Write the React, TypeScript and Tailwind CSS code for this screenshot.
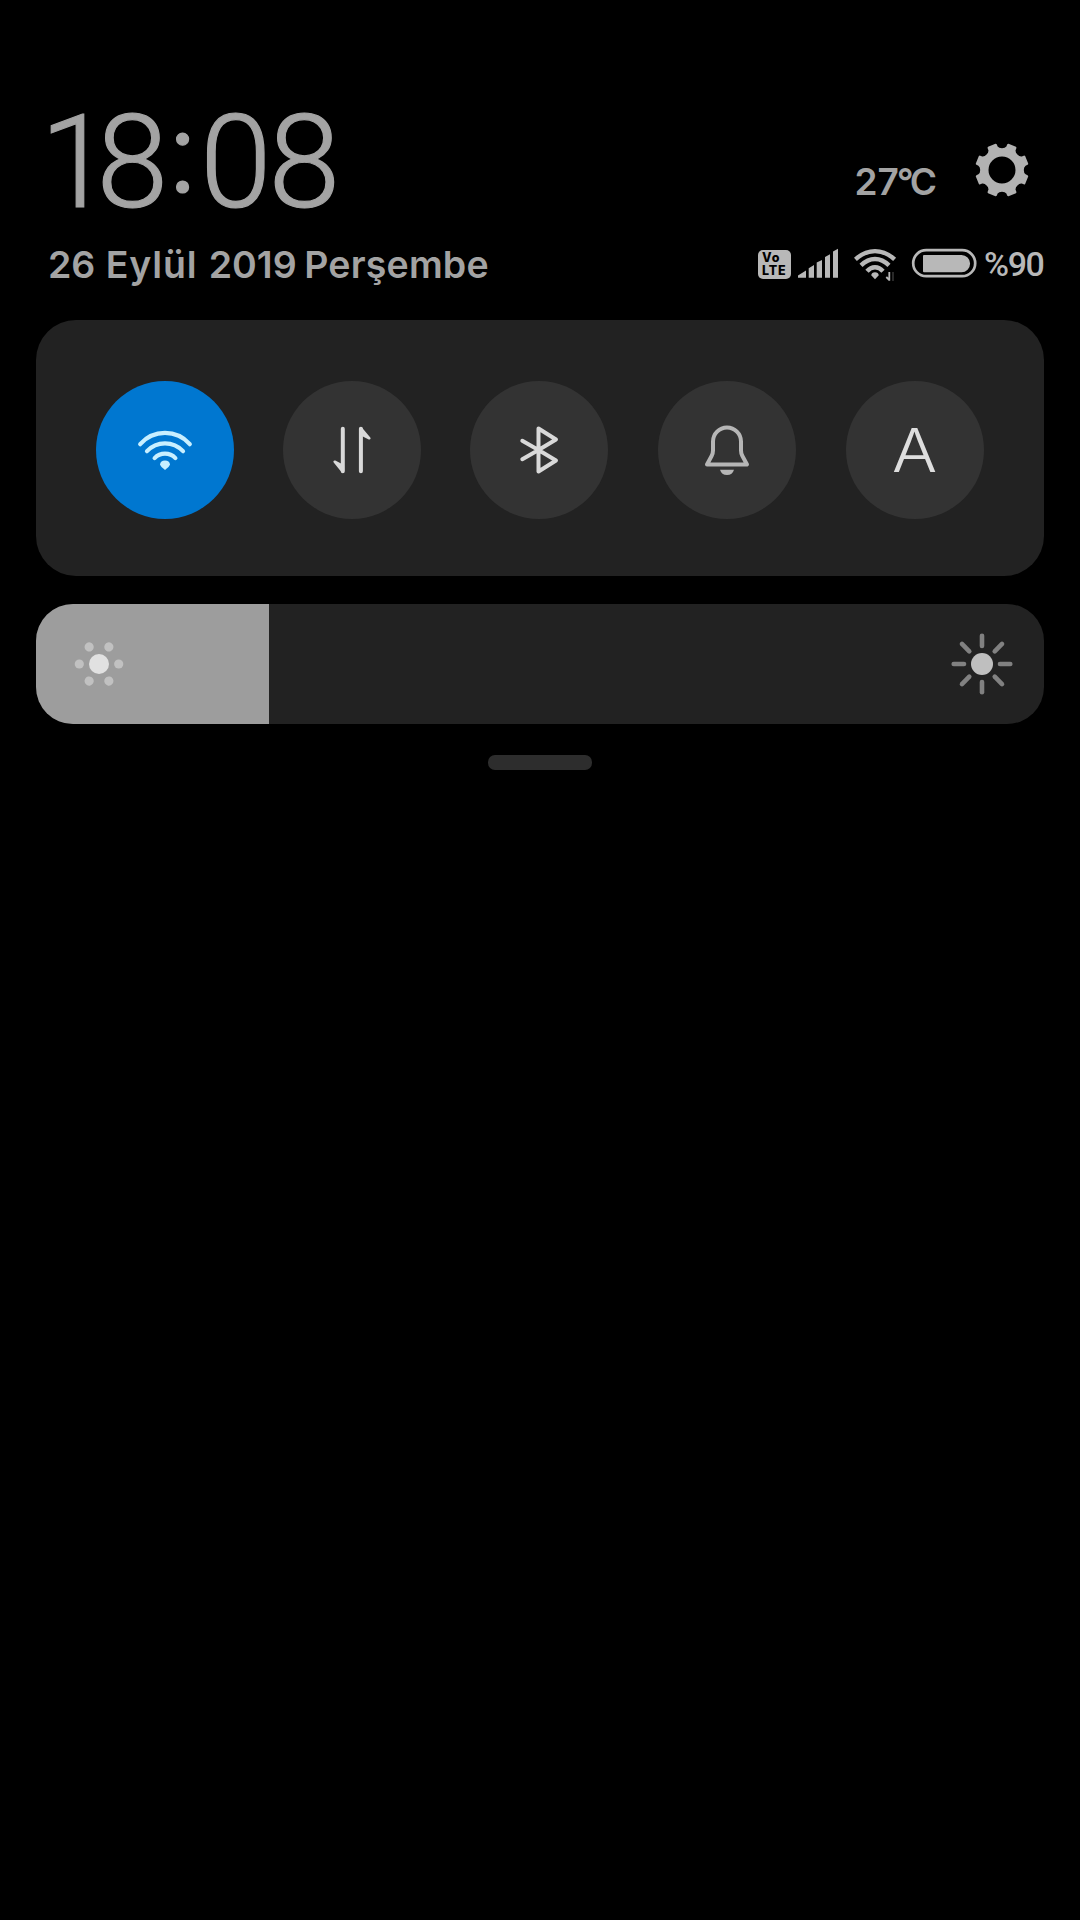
import type { ReactNode } from "react";

function gearPath() {
  const pt = (r: number, deg: number) => {
    const a = (deg * Math.PI) / 180;
    return `${(r * Math.sin(a)).toFixed(2)} ${(-r * Math.cos(a)).toFixed(2)}`;
  };
  let d = "";
  for (let i = 0; i < 8; i++) {
    const n = i * 45;
    d += `${i === 0 ? "M" : "L"}${pt(27, n - 14)} Q${pt(26.9, n - 12)} ${pt(26, n - 11.5)}`;
    d += `L${pt(24, n - 10.5)} Q${pt(22, n - 8)} ${pt(21.8, n)} Q${pt(22, n + 8)} ${pt(24, n + 10.5)}`;
    d += `L${pt(26, n + 11.5)} Q${pt(26.9, n + 12)} ${pt(27, n + 14)}`;
  }
  return d + "Z M13.5 0A13.5 13.5 0 1 0 -13.5 0A13.5 13.5 0 1 0 13.5 0Z";
}

function Gear() {
  return (
    <svg width="60" height="60" viewBox="-30 -30 60 60" fill="#b2b2b2" fillRule="evenodd">
      <path d={gearPath()} />
    </svg>
  );
}

function Signal() {
  return (
    <svg className="ml-[7px]" width="40" height="38" viewBox="798 245 40 38" fill="#b8b8b8">
      <path d="M798 277.8V275.5L806 270.5V277.8ZM808.7 277.8V268.3L814 265V277.8ZM816.7 277.8V262.6L822 260V277.8ZM825 277.8V257L830 254.3V277.8ZM833 277.8V251.5L838 248.8V277.8Z" />
    </svg>
  );
}

function StatusWifi() {
  return (
    <svg className="ml-4" width="44" height="38" viewBox="854 245 44 38" fill="none" stroke="#b8b8b8" strokeWidth="4.4">
      <path d="M855.4 259.4Q864.5 251.1 875 251.1T894.6 259.4" />
      <path d="M861 265.4Q867.5 259 875 259T889 265.4" />
      <path d="M867 271.2Q870.5 267.2 875 267.2T883 271.2" />
      <path d="M871.2 275.2Q871.7 272.3 875 272.3T878.8 275.2L875 279.2Z" fill="#b8b8b8" stroke="none" />
      <path d="M889.3 272V280.8M889.3 280L886.3 277" strokeWidth="1.8" />
      <path d="M893 272V281" stroke="#404040" strokeWidth="1.3" />
    </svg>
  );
}

function Battery() {
  return (
    <svg className="ml-[13px]" width="67" height="38" viewBox="911 245 67 38">
      <rect x="913.2" y="250.2" width="62" height="26" rx="13" fill="none" stroke="#b8b8b8" strokeWidth="2.7" />
      <path d="M924 255H961.5A8.6 8.6 0 0 1 961.5 272.2H924Q923 272.2 923 271.2V256Q923 255 924 255Z" fill="#b8b8b8" />
    </svg>
  );
}

function Tile({ on, children }: { on?: boolean; children: ReactNode }) {
  return (
    <div className={`flex size-[138px] items-center justify-center rounded-full ${on ? "bg-[#0077d0]" : "bg-[#333333]"}`}>
      {children}
    </div>
  );
}

function WifiIcon() {
  return (
    <svg width="60" height="60" viewBox="135 420 60 60" fill="none" stroke="#c8efff" strokeWidth="4.2" strokeLinecap="round">
      <path d="M140.2 444.2A33 33 0 0 1 189.8 444.2" />
      <path d="M147 451.2A24.5 24.5 0 0 1 183 451.2" />
      <path d="M154.6 458.1A14.5 14.5 0 0 1 175.4 458.1" />
      <path d="M160 464.5Q160.5 460.6 165 460.6T170 464.5Q169.5 466.5 165 470Q160.5 466.5 160 464.5Z" fill="#c8efff" stroke="none" />
    </svg>
  );
}

function DataIcon() {
  return (
    <svg width="60" height="60" viewBox="322 420 60 60" fill="#d9d9d9" stroke="#d9d9d9" strokeLinecap="round" strokeLinejoin="round">
      <path d="M342.8 428.7V471.3M360.9 428.7V471.3" fill="none" strokeWidth="4" />
      <path d="M342.8 471.6L334.7 461.7L342.8 466Z" strokeWidth="2.6" />
      <path d="M360.9 428.4L369.3 438.3L360.9 434Z" strokeWidth="2.6" />
    </svg>
  );
}

function BluetoothIcon() {
  return (
    <svg width="60" height="60" viewBox="509 420 60 60" fill="none" stroke="#d9d9d9" strokeWidth="4" strokeLinecap="round" strokeLinejoin="round">
      <path d="M522.3 440.8L538.5 450L556 460.5L538.5 471.5V428.5L556 439.5L538.5 450L522.3 459.2" />
    </svg>
  );
}

function BellIcon() {
  return (
    <svg width="60" height="60" viewBox="697 420 60 60" fill="none" stroke="#b6b6b6" strokeWidth="4" strokeLinejoin="round">
      <path d="M707 464.5L711.6 456Q713 453.5 713 450.5V441.5A14 14 0 0 1 741 441.5V450.5Q741 453.5 742.4 456L747 464.5Z" />
      <path d="M720 469.7H734Q732.5 475 727 475T720 469.7Z" fill="#b6b6b6" stroke="none" />
    </svg>
  );
}

function DimSun() {
  return (
    <svg className="ml-[33px]" width="60" height="60" viewBox="-30 -30 60 60">
      <circle r="10" fill="#e1e1e1" />
      {[0, 60, 120, 180, 240, 300].map((a) => (
        <circle key={a} cx="19.7" r="4.6" fill="#c1c1c1" transform={`rotate(${a})`} />
      ))}
    </svg>
  );
}

function BrightSun() {
  return (
    <svg className="mr-[27px]" width="70" height="70" viewBox="-35 -35 70 70">
      <circle r="11" fill="#bfbfbf" />
      {[0, 45, 90, 135, 180, 225, 270, 315].map((a) => (
        <path key={a} d="M18 0H28.3" stroke="#818181" strokeWidth="4.6" strokeLinecap="round" transform={`rotate(${a})`} />
      ))}
    </svg>
  );
}

export default function App() {
  return (
    <div className="h-[1920px] w-[1080px] overflow-hidden bg-black px-9 pt-[97px] font-['Inter',sans-serif] text-[#a3a3a3]">
      <header>
        <div className="flex h-[131px] items-start justify-between">
          <div className="flex pl-[4px] font-['Roboto',sans-serif] text-[129px] leading-[131px] font-light [-webkit-text-stroke:1.2px_#a3a3a3]">
            <span className="w-[56.5px] tracking-[-18px]">1</span>
            <span className="w-[72.5px]">8</span>
            <span className="-mt-[12px] w-[31px] pr-[4px] text-center font-['Inter',sans-serif] text-[114px]"><span className="-mx-4">:</span></span>
            <span className="w-[68.5px]">0</span>
            <span>8</span>
          </div>
          <div className="flex items-start">
            <span className="mt-[66px] text-[37px] leading-[37px] font-semibold">
              27<span className="-ml-[2px] tracking-[-4px]">°</span>C
            </span>
            <span className="mt-[43px] mr-[12px] ml-[35px]">
              <Gear />
            </span>
          </div>
        </div>
        <div className="mt-[17px] flex h-[38px] items-center justify-between">
          <span className="pt-px pl-[12px] text-[37.5px] leading-[38px] font-semibold whitespace-nowrap">
            26 <span className="mr-[2px] ml-px tracking-[0.8px]">Eylül</span> 2019 <span className="-ml-[2px] tracking-[0.2px]">Perşembe</span>
          </span>
          <div className="flex h-[38px] items-center">
            <div className="flex h-[29px] w-[33px] flex-col justify-center rounded-[5px] bg-[#b8b8b8] pl-[4px] text-[12.5px] leading-[13px] font-extrabold text-black">
              <span className="tracking-[0.9px]">Vo</span>
              <span className="tracking-[0.8px]">LTE</span>
            </div>
            <Signal />
            <StatusWifi />
            <Battery />
            <span className="w-[66px] pl-[6px] font-['Roboto',sans-serif] text-[34px] leading-[38px] font-medium tracking-[-1.4px] text-[#b8b8b8]">%90</span>
          </div>
        </div>
      </header>

      <section className="mt-[37px] flex h-[256px] gap-[49px] rounded-[40px] bg-[#222222] pt-[61px] pl-[60px]">
        <Tile on>
          <WifiIcon />
        </Tile>
        <Tile>
          <DataIcon />
        </Tile>
        <Tile>
          <BluetoothIcon />
        </Tile>
        <div className="ml-px">
          <Tile>
            <BellIcon />
          </Tile>
        </div>
        <div className="ml-px">
          <Tile>
            <span className="scale-x-110 text-[61px] leading-[62px] font-light text-[#dedede]">A</span>
          </Tile>
        </div>
      </section>

      <section className="mt-[28px] flex h-[120px] items-center justify-between overflow-hidden rounded-[37px] bg-[#222222]">
        <div className="flex h-full w-[233px] items-center bg-[#9d9d9d]">
          <DimSun />
        </div>
        <BrightSun />
      </section>

      <div className="mx-auto mt-[31px] h-[15px] w-[104px] rounded-[7px] bg-[#2d2d2d]" />
    </div>
  );
}
